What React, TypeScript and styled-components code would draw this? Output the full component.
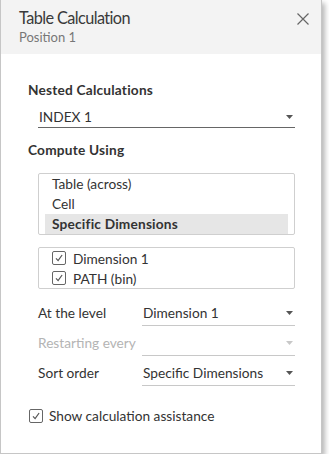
import styled, { createGlobalStyle } from "styled-components";

const GlobalStyle = createGlobalStyle`
  html, body {
    margin: 0;
    padding: 0;
    background: #fff;
  }
  body {
    font-family: Lato, "Liberation Sans", Arial, sans-serif;
    color: #333;
  }
`;

const CheckIcon = () => (
  <svg width="10" height="10" viewBox="0 0 10 10">
    <path d="M2 5.4 L4.1 7.6 L8.1 2" fill="none" stroke="#555" strokeWidth="1.2" />
  </svg>
);

const Arrow = ({ disabled }: { disabled?: boolean }) => (
  <svg width="7" height="4" viewBox="0 0 7 4">
    <path d="M0 0 H7 L3.5 4 Z" fill={disabled ? "#c8c8c8" : "#555"} />
  </svg>
);

const App = () => {
  return (
    <>
      <GlobalStyle />
      <Dialog>
        <Header>
          <TitleBlock>
            <Title>Table Calculation</Title>
            <Subtitle>Position 1</Subtitle>
          </TitleBlock>
          <CloseButton aria-label="close">
            <svg width="12" height="12" viewBox="0 0 12 12">
              <path d="M0.5 0.5 L11.5 11.5 M11.5 0.5 L0.5 11.5" stroke="#666" strokeWidth="1.2" />
            </svg>
          </CloseButton>
        </Header>
        <Body>
          <SectionLabel>Nested Calculations</SectionLabel>
          <Indent>
            <Select $strong $tall>
              <span>INDEX 1</span>
              <Arrow />
            </Select>
          </Indent>
          <SectionLabel $top={14}>Compute Using</SectionLabel>
          <Indent>
            <ListBox>
              <ListItem>Table (across)</ListItem>
              <ListItem>Cell</ListItem>
              <ListItem $selected>Specific Dimensions</ListItem>
            </ListBox>
            <CheckList>
              <CheckRow>
                <Box><CheckIcon /></Box>
                <span>Dimension 1</span>
              </CheckRow>
              <CheckRow>
                <Box><CheckIcon /></Box>
                <span>PATH (bin)</span>
              </CheckRow>
            </CheckList>
            <FieldGrid>
              <FieldLabel>At the level</FieldLabel>
              <Select>
                <span>Dimension 1</span>
                <Arrow />
              </Select>
              <FieldLabel $disabled>Restarting every</FieldLabel>
              <Select $disabled>
                <span></span>
                <Arrow disabled />
              </Select>
              <FieldLabel>Sort order</FieldLabel>
              <Select>
                <span>Specific Dimensions</span>
                <Arrow />
              </Select>
            </FieldGrid>
          </Indent>
          <Assist>
            <Box><CheckIcon /></Box>
            <span>Show calculation assistance</span>
          </Assist>
        </Body>
      </Dialog>
    </>
  );
};

export default App;

const Dialog = styled.div`
  width: 322px;
  height: 454px;
  border: 1px solid #c6c6c6;
  border-top: none;
  box-sizing: border-box;
  background: #fff;
  box-shadow: 3px 3px 5px rgba(0, 0, 0, 0.28);
  display: flex;
  flex-direction: column;
`;

const Header = styled.div`
  height: 54px;
  flex-shrink: 0;
  box-sizing: border-box;
  background: #f3f3f3;
  padding: 7px 12px 0 18px;
  display: flex;
  justify-content: space-between;
  align-items: flex-start;
`;

const TitleBlock = styled.div`
  display: flex;
  flex-direction: column;
`;

const Title = styled.div`
  font-size: 16.3px;
  letter-spacing: -0.6px;
  line-height: 22px;
  color: #3a3a3a;
`;

const Subtitle = styled.div`
  font-size: 13px;
  line-height: 17px;
  color: #777;
`;

const CloseButton = styled.button`
  border: none;
  background: none;
  padding: 0;
  margin-top: 6px;
  width: 12px;
  height: 12px;
  cursor: pointer;
  display: flex;
`;

const Body = styled.div`
  padding: 28px 26px 0 27px;
  display: flex;
  flex-direction: column;
  font-size: 13.7px;
`;

const SectionLabel = styled.div<{ $top?: number }>`
  font-weight: 700;
  letter-spacing: 0.2px;
  line-height: 16px;
  color: #333;
  margin-top: ${({ $top }) => $top ?? 0}px;
`;

const Indent = styled.div`
  padding-left: 10px;
  display: flex;
  flex-direction: column;
`;

const Select = styled.div<{ $strong?: boolean; $disabled?: boolean; $tall?: boolean }>`
  height: ${({ $tall }) => ($tall ? 30 : 26)}px;
  box-sizing: border-box;
  display: flex;
  align-items: center;
  justify-content: space-between;
  padding: ${({ $tall }) => ($tall ? "8px 2px 0 1px" : "0 2px 0 1px")};
  color: #333;
  border-bottom: 1px solid ${({ $strong }) => ($strong ? "#666" : "#c8c8c8")};
  cursor: ${({ $disabled }) => ($disabled ? "default" : "pointer")};
`;

const ListBox = styled.div`
  margin-top: 15px;
  height: 62px;
  box-sizing: border-box;
  border: 1px solid #cfcfcf;
  border-radius: 2px;
  padding: 0 6px;
  display: flex;
  flex-direction: column;
`;

const ListItem = styled.div<{ $selected?: boolean }>`
  height: 20px;
  line-height: 20px;
  padding-left: 7px;
  color: #333;
  font-weight: ${({ $selected }) => ($selected ? 700 : 400)};
  letter-spacing: ${({ $selected }) => ($selected ? "0.2px" : "0")};
  background: ${({ $selected }) => ($selected ? "#e6e6e6" : "transparent")};
`;

const CheckList = styled.div`
  margin-top: 12px;
  height: 42px;
  box-sizing: border-box;
  border: 1px solid #cfcfcf;
  border-radius: 2px;
  padding: 0 0 0 13px;
  display: flex;
  flex-direction: column;
`;

const CheckRow = styled.div`
  height: 20px;
  display: flex;
  align-items: center;
  gap: 7px;
  color: #333;
`;

const Box = styled.span`
  width: 14px;
  height: 14px;
  box-sizing: border-box;
  border: 1px solid #666;
  border-radius: 2px;
  display: flex;
  align-items: center;
  justify-content: center;
  background: #fff;
  flex-shrink: 0;
`;

const FieldGrid = styled.div`
  margin-top: 11px;
  display: grid;
  grid-template-columns: 104px 1fr;
  row-gap: 4px;
  align-items: end;
`;

const FieldLabel = styled.div<{ $disabled?: boolean }>`
  line-height: 26px;
  color: ${({ $disabled }) => ($disabled ? "#b4b4b4" : "#333")};
`;

const Assist = styled.label`
  margin-top: 21px;
  margin-left: 1px;
  display: flex;
  align-items: center;
  gap: 6px;
  color: #333;
`;
